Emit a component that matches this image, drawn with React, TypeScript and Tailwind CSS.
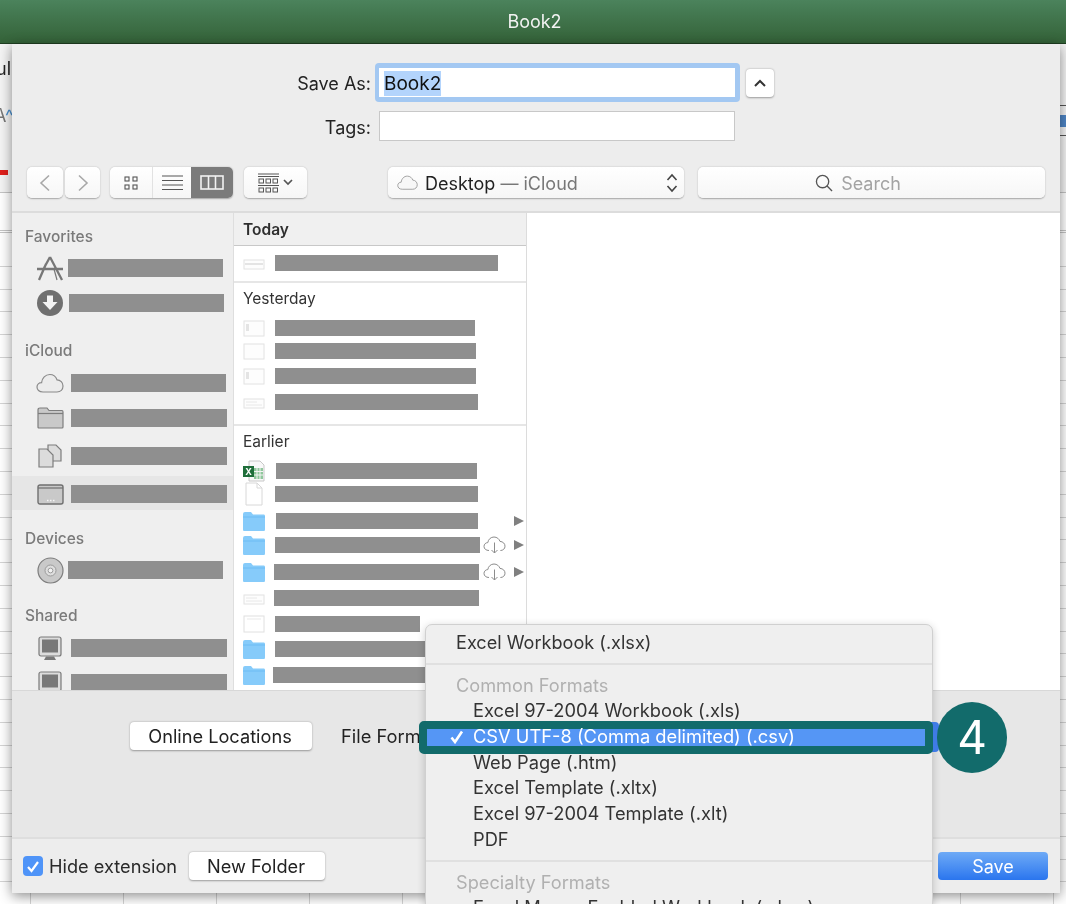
// Excel "Save As" sheet with the file format menu open and a numbered callout on top
const FONT = "font-['Inter','Liberation_Sans',sans-serif]";

function AppStoreIcon() {
  return (
    <svg width="28" height="26" viewBox="0 0 28 26" fill="none" stroke="#777" strokeWidth="2.3">
      <path d="M14 2 L8 13 M14 2 L26 25 M1 14 H27 M3 25 L10 9" />
      <path d="M18 14 L21 25" strokeWidth="1.2" />
    </svg>
  );
}
function DownloadIcon() {
  return (
    <svg width="28" height="28" viewBox="0 0 28 28">
      <circle cx="14" cy="14" r="13" fill="#707070" />
      <path d="M11 6.5 H17 V13 H21.5 L14 21 L6.5 13 H11 Z" fill="#f4f4f4" />
    </svg>
  );
}
function CloudIcon({ fill = '#ececec', stroke = '#8a8a8a', size = 28 }: { fill?: string; stroke?: string; size?: number }) {
  return (
    <svg width={size} height={(size * 20) / 28} viewBox="0 0 28 20" fill={fill} stroke={stroke} strokeWidth="1.2">
      <path d="M7 19 C3 19 1 16.6 1 14 C1 11.4 3 9.6 5.6 9.6 C6 5 9.4 1.5 13.8 1.5 C17.4 1.5 20 3.8 21 6.8 C24.4 7 27 9.6 27 13 C27 16.6 24.4 19 21 19 Z" />
    </svg>
  );
}
function FolderIcon() {
  return (
    <svg width="27" height="22" viewBox="0 0 27 22">
      <path d="M1 3 Q1 1 3 1 H10 L12 3.5 H25 Q26 3.5 26 5 V20 Q26 21 25 21 H2 Q1 21 1 20 Z" fill="#c9c9c9" stroke="#7d7d7d" strokeWidth="1.2" />
      <path d="M1 6.5 H26" stroke="#7d7d7d" strokeWidth="1.2" />
    </svg>
  );
}
function DocsIcon() {
  return (
    <svg width="24" height="24" viewBox="0 0 24 24" fill="#dcdcdc" stroke="#7d7d7d" strokeWidth="1.2">
      <path d="M10 1 H18 L23 6 V17 H10 Z" />
      <path d="M1 5 H9 L15 11 V23 H1 Z" />
    </svg>
  );
}
function DesktopIcon() {
  return (
    <svg width="27" height="21" viewBox="0 0 27 21">
      <rect x="1" y="1" width="25" height="19" rx="2" fill="#c9c9c9" stroke="#6f6f6f" strokeWidth="1.4" />
      <path d="M1 4 H26" stroke="#6f6f6f" strokeWidth="1.2" />
      <path d="M10 16.5 H11.5 M13 16.5 H14.5 M16 16.5 H17.5" stroke="#f4f4f4" strokeWidth="1.6" />
    </svg>
  );
}
function DiscIcon() {
  return (
    <svg width="27" height="27" viewBox="0 0 27 27">
      <circle cx="13.5" cy="13.5" r="12.5" fill="#c9c9c9" stroke="#7d7d7d" strokeWidth="1.2" />
      <circle cx="13.5" cy="13.5" r="5.5" fill="#dedede" stroke="#9a9a9a" />
      <circle cx="13.5" cy="13.5" r="2.4" fill="#f2f2f2" stroke="#9a9a9a" />
    </svg>
  );
}
function MonitorIcon() {
  return (
    <svg width="24" height="25" viewBox="0 0 24 25">
      <rect x="1" y="1" width="22" height="19" rx="2" fill="#dcdcdc" stroke="#7a7a7a" strokeWidth="1.2" />
      <rect x="4" y="3.5" width="16" height="13" fill="#787878" />
      <path d="M8 20.5 H16 L18 24 H6 Z" fill="#787878" />
    </svg>
  );
}
function ThumbIcon({ kind }: { kind: 'flat' | 'side' | 'page' | 'lines' | 'big' }) {
  const y = kind === 'flat' || kind === 'lines' ? 5 : 1;
  const h = kind === 'flat' || kind === 'lines' ? 9 : 15;
  if (kind === 'big') {
    return (
      <svg width="22" height="18" viewBox="0 0 22 18">
        <rect x="1" y="1" width="20" height="16" fill="#fff" stroke="#e0e0e0" />
        <rect x="4" y="3" width="14" height="2" fill="#f4f4f4" />
      </svg>
    );
  }
  return (
    <svg width="22" height="17" viewBox="0 0 22 17">
      <rect x="1" y={y} width="20" height={h} fill="#fdfdfd" stroke="#e2e2e2" />
      {kind === 'flat' && <path d="M2 9 H20" stroke="#e4e4e4" strokeWidth="2" />}
      {kind === 'lines' && <path d="M3 8 H14 M3 11 H19" stroke="#e8e8e8" />}
      {kind === 'side' && <rect x="3" y="4" width="3" height="7" fill="#e4e4e4" />}
    </svg>
  );
}
function ExcelIcon() {
  return (
    <svg width="22" height="22" viewBox="0 0 22 22">
      <path d="M6 1 H17 L21 5 V21 H6 Z" fill="#f8f8f8" stroke="#c8c8c8" />
      <path d="M11 8 H20 V19 H11 Z" fill="#8fc79b" />
      <path d="M14 8 V19 M17 8 V19 M11 11.5 H20 M11 15 H20" stroke="#f4f4f4" />
      <rect x="0" y="6" width="11" height="11" fill="#1f6e3a" />
      <text x="5.5" y="15" textAnchor="middle" fontSize="9" fontWeight="700" fill="#fff" fontFamily="Inter">X</text>
    </svg>
  );
}
function PageIcon() {
  return (
    <svg width="20" height="24" viewBox="0 0 20 24">
      <path d="M2 1 H13 L18 6 V23 H2 Z" fill="#fff" stroke="#d8d8d8" />
      <path d="M13 1 V6 H18" fill="none" stroke="#d8d8d8" />
    </svg>
  );
}
function BlueFolderIcon() {
  return (
    <svg width="22" height="19" viewBox="0 0 22 19">
      <path d="M0 2 Q0 0 2 0 H8 L10 2.5 H21 Q22 2.5 22 4 V17.5 Q22 19 21 19 H1 Q0 19 0 17.5 Z" fill="#86cbfa" />
      <path d="M0 5 H22" stroke="#6dbcf4" />
    </svg>
  );
}
function DownloadCloud() {
  return (
    <svg width="23" height="18" viewBox="0 0 23 18" fill="none" stroke="#8c8c8c" strokeWidth="1">
      <path d="M6 14.5 C3 14.5 1 12.8 1 10.4 C1 8.2 2.7 6.6 4.8 6.6 C5.2 3.4 7.8 1 11 1 C14 1 16.2 3 17 5.4 C20 5.6 22 7.6 22 10.2 C22 12.8 20 14.5 17.4 14.5" />
      <path d="M11.5 6.5 V17 M8.5 14 L11.5 17 L14.5 14" />
    </svg>
  );
}

function Bar({ className }: { className: string }) {
  return <div className={`h-full bg-[#8f8f8f] ${className}`} />;
}

function SideLabel({ text, className }: { text: string; className: string }) {
  return <div className={`h-[20px] pl-[13px] text-[15.5px] leading-[22px] font-medium text-[#7a7a7a] ${className}`}>{text}</div>;
}

function SideRow({ icon, barClass, className = '' }: { icon: React.ReactNode; barClass: string; className?: string }) {
  return (
    <div className={`h-[18px] flex items-center pl-[24px] ${className}`}>
      <div className="w-[28px] flex items-center justify-center">{icon}</div>
      <Bar className={barClass} />
    </div>
  );
}

function Sidebar() {
  return (
    <div className="w-[222px] shrink-0 h-full overflow-hidden bg-[#efefef] pt-[13px] border-r border-[#dedede]">
      <SideLabel text="Favorites" className="" />
      <SideRow className="mt-[13px]" icon={<AppStoreIcon />} barClass="ml-[4px] w-[155px]" />
      <SideRow className="mt-[17px]" icon={<DownloadIcon />} barClass="ml-[5px] w-[155px]" />
      <SideLabel text="iCloud" className="mt-[28px]" />
      <SideRow className="mt-[14px]" icon={<CloudIcon />} barClass="ml-[7px] w-[155px]" />
      <SideRow className="mt-[17px]" icon={<FolderIcon />} barClass="ml-[7px] w-[156px]" />
      <SideRow className="mt-[20px]" icon={<DocsIcon />} barClass="ml-[7px] w-[156px]" />
      <div className="mt-[11px] pt-[9px] pb-[7px] bg-[#e6e6e6]">
        <SideRow icon={<DesktopIcon />} barClass="ml-[7px] w-[156px]" />
      </div>
      <SideLabel text="Devices" className="mt-[18px]" />
      <SideRow className="mt-[13px]" icon={<DiscIcon />} barClass="ml-[4px] w-[155px]" />
      <SideLabel text="Shared" className="mt-[26px]" />
      <SideRow className="mt-[14px]" icon={<MonitorIcon />} barClass="ml-[7px] w-[156px]" />
      <SideRow className="mt-[17px]" icon={<MonitorIcon />} barClass="ml-[7px] w-[156px]" />
    </div>
  );
}

function FileRow({ icon, barClass, className = '', cloud, arrow }: { icon: React.ReactNode; barClass: string; className?: string; cloud?: boolean; arrow?: boolean }) {
  return (
    <div className={`h-[16px] flex items-center pl-[9px] ${className}`}>
      <div className="w-[22px] flex items-center justify-center">{icon}</div>
      <Bar className={barClass} />
      {(cloud || arrow) && (
        <div className="ml-auto mr-[2px] flex items-center gap-[8px]">
          {cloud && <DownloadCloud />}
          {arrow && <div className="w-0 h-0 border-y-[5.5px] border-y-transparent border-l-[10px] border-l-[#808080]" />}
        </div>
      )}
    </div>
  );
}

function GroupLabel({ text, className }: { text: string; className: string }) {
  return <div className={`h-[20px] pl-[9px] text-[15.5px] leading-[22px] text-[#333] ${className}`}>{text}</div>;
}

function FileColumn() {
  return (
    <div className="w-[293px] shrink-0 h-full overflow-hidden bg-white border-r border-[#dcdcdc]">
      <div className="h-[33px] pl-[9px] pt-[2px] flex items-center bg-[#f0f0f0] border-b border-[#c8c8c8] text-[15.5px] font-semibold text-[#2e2e2e]">Today</div>
      <FileRow className="mt-[9px]" icon={<ThumbIcon kind="flat" />} barClass="ml-[10px] w-[223px]" />
      <div className="mt-[10px] h-[2px] bg-[#e6e6e6]" />
      <GroupLabel text="Yesterday" className="mt-[5px]" />
      <FileRow className="mt-[12px]" icon={<ThumbIcon kind="side" />} barClass="ml-[10px] w-[200px]" />
      <FileRow className="mt-[7px]" icon={<ThumbIcon kind="page" />} barClass="ml-[10px] w-[201px]" />
      <FileRow className="mt-[9px]" icon={<ThumbIcon kind="side" />} barClass="ml-[10px] w-[201px]" />
      <FileRow className="mt-[10px]" icon={<ThumbIcon kind="lines" />} barClass="ml-[10px] w-[203px]" />
      <div className="mt-[14px] h-[2px] bg-[#e6e6e6]" />
      <GroupLabel text="Earlier" className="mt-[5px]" />
      <FileRow className="mt-[12px]" icon={<ExcelIcon />} barClass="ml-[11px] w-[201px]" />
      <FileRow className="mt-[7px]" icon={<PageIcon />} barClass="ml-[10px] w-[203px]" />
      <FileRow className="mt-[11px]" icon={<BlueFolderIcon />} barClass="ml-[11px] w-[202px]" arrow />
      <FileRow className="mt-[8px]" icon={<BlueFolderIcon />} barClass="ml-[10px] w-[205px]" cloud arrow />
      <FileRow className="mt-[11px]" icon={<BlueFolderIcon />} barClass="ml-[9px] w-[205px]" cloud arrow />
      <FileRow className="mt-[10px]" icon={<ThumbIcon kind="lines" />} barClass="ml-[9px] w-[205px]" />
      <FileRow className="mt-[10px]" icon={<ThumbIcon kind="big" />} barClass="ml-[10px] w-[145px]" />
      <FileRow className="mt-[9px]" icon={<BlueFolderIcon />} barClass="ml-[10px] w-[205px]" />
      <FileRow className="mt-[10px]" icon={<BlueFolderIcon />} barClass="ml-[8px] w-[205px]" />
    </div>
  );
}

const toolBtn = 'h-[31px] bg-gradient-to-b from-white to-[#f6f6f6] rounded-[5px] shadow-[0_0.5px_1.5px_rgba(0,0,0,0.3)] flex items-center justify-center';

function Toolbar() {
  return (
    <div className="mt-[26px] h-[31px] flex items-center pl-[15px]">
      <div className={`${toolBtn} w-[36px]`}>
        <svg width="12" height="18" viewBox="0 0 12 18" fill="none" stroke="#a8a8a8" strokeWidth="1.6"><path d="M10 1.5 L2 9 L10 16.5" /></svg>
      </div>
      <div className={`${toolBtn} w-[35px] ml-[2px]`}>
        <svg width="12" height="18" viewBox="0 0 12 18" fill="none" stroke="#a8a8a8" strokeWidth="1.6"><path d="M2 1.5 L10 9 L2 16.5" /></svg>
      </div>
      <div className={`${toolBtn} w-[123px] ml-[10px] overflow-hidden`}>
        <div className="w-[43px] h-full flex items-center justify-center border-r border-[#e2e2e2]">
          <svg width="14" height="14" viewBox="0 0 14 14" fill="none" stroke="#555" strokeWidth="1.1">
            <rect x="1" y="1" width="4" height="4" /><rect x="9" y="1" width="4" height="4" /><rect x="1" y="9" width="4" height="4" /><rect x="9" y="9" width="4" height="4" />
          </svg>
        </div>
        <div className="w-[38px] h-full flex items-center justify-center">
          <svg width="21" height="16" viewBox="0 0 21 16" stroke="#555" strokeWidth="1"><path d="M0 1 H21 M0 5.5 H21 M0 10 H21 M0 14.5 H21" /></svg>
        </div>
        <div className="w-[42px] h-full flex items-center justify-center bg-[#7b7b7b]">
          <svg width="24" height="15" viewBox="0 0 24 15" fill="none" stroke="#f2f2f2" strokeWidth="1.6"><rect x="1" y="1" width="22" height="13" /><path d="M8.5 1 V14 M15.5 1 V14" /></svg>
        </div>
      </div>
      <div className={`${toolBtn} w-[63px] ml-[11px] gap-[4px]`}>
        <svg width="21" height="20" viewBox="0 0 21 20" fill="none" stroke="#555" strokeWidth="1">
          <path d="M0 1 H21 M0 3.5 H21" /><rect x="1" y="6" width="4.5" height="4" /><rect x="8" y="6" width="4.5" height="4" /><rect x="15" y="6" width="4.5" height="4" />
          <path d="M0 12.5 H21" /><rect x="1" y="15" width="4.5" height="4" /><rect x="8" y="15" width="4.5" height="4" /><rect x="15" y="15" width="4.5" height="4" />
        </svg>
        <svg width="10" height="7" viewBox="0 0 10 7" fill="none" stroke="#555" strokeWidth="1.7"><path d="M1 1 L5 5 L9 1" /></svg>
      </div>
      <div className={`${toolBtn} w-[296px] ml-[81px] pl-[9px] pr-[6px] !justify-start`}>
        <CloudIcon fill="#f7f7f7" stroke="#9a9a9a" size={21} />
        <span className="ml-[7px] mt-[2px] text-[18px] text-[#1f1f1f]">Desktop</span>
        <span className="ml-[5px] mt-[2px] text-[18px] text-[#777]">— iCloud</span>
        <svg className="ml-auto" width="12" height="20" viewBox="0 0 12 20" fill="none" stroke="#444" strokeWidth="1.6"><path d="M1.5 7 L6 2 L10.5 7 M1.5 13 L6 18 L10.5 13" /></svg>
      </div>
      <div className={`${toolBtn} w-[347px] ml-[14px] gap-[8px] pr-[27px]`}>
        <svg width="18" height="18" viewBox="0 0 19 19" fill="none" stroke="#555" strokeWidth="1.4"><circle cx="8" cy="8" r="6.5" /><path d="M12.5 12.5 L18 18" /></svg>
        <span className="mt-[2px] text-[18px] text-[#a3a3a3]">Search</span>
      </div>
    </div>
  );
}

function Header() {
  return (
    <div className="h-[169px] shrink-0 bg-[#ededed] border-b-2 border-[#dcdcdc] pt-[19px]">
      <div className="h-[39px] flex items-center">
        <div className="w-[361px] pt-[2px] text-right text-[18px] text-[#222] pr-[2px]">Save As:</div>
        <div className="ml-[2px] w-[365px] h-[39px] pl-[4px] pr-[5px] py-[5px] bg-[#a3c8f2] rounded-[4px]">
          <div className="h-full bg-white flex items-center pl-[5px] pt-[2px]">
            <span className="bg-[#b3d4fc] text-[19px] leading-[25px] text-[#111]">Book2</span>
          </div>
        </div>
        <div className="ml-[6px] w-[28px] h-[28px] bg-white rounded-[4px] shadow-[0_0.5px_2px_rgba(0,0,0,0.35)] flex items-center justify-center">
          <svg width="12" height="8" viewBox="0 0 12 8" fill="none" stroke="#333" strokeWidth="2"><path d="M1 7 L6 2 L11 7" /></svg>
        </div>
      </div>
      <div className="mt-[9px] h-[30px] flex items-center">
        <div className="w-[361px] pt-[2px] text-right text-[18px] text-[#222] pr-[2px]">Tags:</div>
        <div className="ml-[6px] w-[356px] h-[30px] bg-white border border-[#c8c8c8]" />
      </div>
      <Toolbar />
    </div>
  );
}

function SheetButton({ label, className }: { label: string; className: string }) {
  return (
    <div className={`h-[28px] pt-[1px] bg-white rounded-[4px] shadow-[0_0.5px_2px_rgba(0,0,0,0.35)] flex items-center justify-center text-[18.2px] text-[#222] ${className}`}>{label}</div>
  );
}

function SaveSheet() {
  return (
    <div className="absolute left-[12px] top-[44px] w-[1048px] h-[849px] flex flex-col overflow-hidden shadow-[0_3px_12px_rgba(0,0,0,0.45)]">
      <Header />
      <div className="h-[477px] shrink-0 flex bg-white">
        <Sidebar />
        <FileColumn />
      </div>
      <div className="h-[149px] shrink-0 bg-[#e7e7e7] border-t border-[#d8d8d8] border-b-2 border-b-[#dedede] pt-[31px] flex items-start">
        <SheetButton label="Online Locations" className="ml-[118px] w-[182px] pr-[2px]" />
        <div className="ml-[29px] h-[28px] pt-[2px] flex items-center text-[18.3px] text-[#222] whitespace-nowrap">File Format</div>
      </div>
      <div className="flex-1 bg-[#ededed] flex items-center pl-[11px]">
        <div className="w-[20px] h-[20px] rounded-[4px] bg-[#4f94f8] flex items-center justify-center">
          <svg width="14" height="13" viewBox="0 0 14 13" fill="none" stroke="#fff" strokeWidth="2.2"><path d="M2 7 L5.5 11 L12 2" /></svg>
        </div>
        <div className="ml-[6px] pt-[1px] text-[18.2px] text-[#2a2a2a]">Hide extension</div>
        <SheetButton label="New Folder" className="ml-[12px] w-[136px] pr-[2px]" />
        <div className="ml-auto mr-[12px] w-[110px] h-[28px] rounded-[4px] bg-gradient-to-b from-[#6eaaf6] to-[#2a75ee] flex items-center justify-center text-[18px] text-white">Save</div>
      </div>
    </div>
  );
}

function MenuItem({ label, className = '' }: { label: string; className?: string }) {
  return <div className={`h-[25.7px] flex items-center pl-[47px] text-[18.3px] text-[#333] whitespace-nowrap ${className}`}>{label}</div>;
}
function MenuHeading({ label, className = '' }: { label: string; className?: string }) {
  return <div className={`h-[25px] flex items-center pl-[30px] text-[18.2px] text-[#b0b0b0] ${className}`}>{label}</div>;
}

function FormatMenu() {
  return (
    <div className="absolute left-[425px] top-[624px] w-[508px] h-[290px] bg-[#efefef] border border-[#d0d0d0] rounded-t-[7px] shadow-[0_2px_8px_rgba(0,0,0,0.2)] pt-[5px] overflow-hidden">
      <div className="h-[25px] flex items-center pl-[30px] text-[18.1px] text-[#333]">Excel Workbook (.xlsx)</div>
      <div className="mt-[8px] h-[2px] bg-[#e0e0e0]" />
      <MenuHeading label="Common Formats" className="mt-[8px]" />
      <MenuItem label="Excel 97-2004 Workbook (.xls)" />
      <MenuItem label="CSV UTF-8 (Comma delimited) (.csv)" />
      <MenuItem label="Web Page (.htm)" />
      <MenuItem label="Excel Template (.xltx)" />
      <MenuItem label="Excel 97-2004 Template (.xlt)" />
      <MenuItem label="PDF" />
      <div className="mt-[8px] h-[2px] bg-[#e0e0e0]" />
      <MenuHeading label="Specialty Formats" className="mt-[8px]" />
      <MenuItem label="Excel Macro-Enabled Workbook (.xlsm)" />
    </div>
  );
}

function Callout() {
  return (
    <>
      <div className="absolute left-[925px] top-[722px] w-[14px] h-[30px] rounded-r-[4px] bg-[#3f7be6]" />
      <div className="absolute left-[419px] top-[721px] w-[514px] h-[33px] border-[8px] border-[#126b6b] rounded-[5px] bg-[#5596f5] flex items-center pl-[23px] pb-[2px] text-[18.3px] text-white whitespace-nowrap">
        <svg className="w-[14px] h-[14px] mr-[9px]" viewBox="0 0 14 14" fill="none" stroke="#fff" strokeWidth="2.6"><path d="M1.5 7.5 L5 12 L12 1.5" /></svg>
        <span>CSV UTF-8 (Comma delimited) (.csv)</span>
      </div>
      <div className="absolute left-[937px] top-[702px] w-[70px] h-[71px] rounded-full bg-[#126b6b] flex items-center justify-center text-[46px] text-white">4</div>
    </>
  );
}

function Workbook() {
  return (
    <div className="h-full flex flex-col">
      <div className="h-[44px] shrink-0 flex items-center justify-center pl-[3px] bg-gradient-to-b from-[#4b835c] to-[#346238] border-b border-[#1f3f22] text-[18px] text-[#f2f2f2]">Book2</div>
      <div className="h-[149px] shrink-0 bg-[#f4f4f4] border-b border-[#c4c4c4] overflow-hidden">
        <div className="mt-[11px] text-[18px] text-[#222] -ml-[4px]">ul</div>
        <div className="mt-[20px] -ml-[6px] text-[18px] text-[#777]">A<span className="text-[#4a90d0]">^</span></div>
      </div>
      <div className="h-[40px] shrink-0 bg-white border-b-[3px] border-double border-[#c4c4c4]" />
      <div className="h-[11px] shrink-0 bg-white" />
      <div className="flex-1 bg-white bg-[repeating-linear-gradient(180deg,transparent_0,transparent_21.8px,#d4d4d4_21.8px,#d4d4d4_22.8px)]" />
      <div className="absolute left-0 top-[170px] w-[8px] h-[5px] bg-[#e0201c]" />
      <div className="absolute left-0 bottom-0 w-full h-[12px] bg-[repeating-linear-gradient(90deg,transparent_0,transparent_30px,#d4d4d4_30px,#d4d4d4_31px,transparent_31px,transparent_93px)]" />
      <div className="absolute left-[1060px] top-[105px] w-[6px] h-[31px] border-y border-[#555] flex items-center">
        <div className="w-full h-[12px] bg-[#4f86c6]" />
      </div>
    </div>
  );
}

export default function App() {
  return (
    <div className={`relative w-[1066px] h-[904px] overflow-hidden bg-white blur-[0.4px] ${FONT}`}>
      <Workbook />
      <SaveSheet />
      <FormatMenu />
      <Callout />
    </div>
  );
}
